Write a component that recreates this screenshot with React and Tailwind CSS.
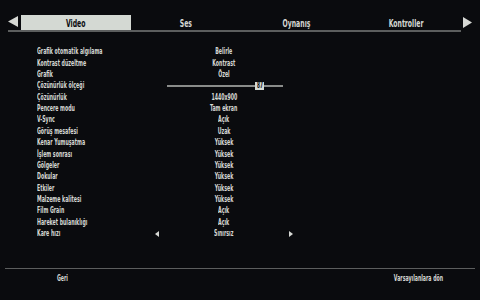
import React from "react";

const rows = [
  ["Grafik otomatik algılama", "Belirle"],
  ["Kontrast düzeltme", "Kontrast"],
  ["Grafik", "Özel"],
  ["Çözünürlük ölçeği", "__slider"],
  ["Çözünürlük", "1440x900"],
  ["Pencere modu", "Tam ekran"],
  ["V-Sync", "Açık"],
  ["Görüş mesafesi", "Uzak"],
  ["Kenar Yumuşatma", "Yüksek"],
  ["İşlem sonrası", "Yüksek"],
  ["Gölgeler", "Yüksek"],
  ["Dokular", "Yüksek"],
  ["Etkiler", "Yüksek"],
  ["Malzeme kalitesi", "Yüksek"],
  ["Film Grain", "Açık"],
  ["Hareket bulanıklığı", "Açık"],
  ["Kare hızı", "__arrows"],
];

const font = { fontFamily: '"Liberation Sans Narrow", "DejaVu Sans Condensed", "Liberation Sans", sans-serif' };

function T({ children, className = "" }) {
  return <span className={"inline-block whitespace-nowrap " + className}>{children}</span>;
}

export default function App() {
  return (
    <div className="w-[480px] h-[300px] bg-[#0a0b0e] flex flex-col font-bold text-[#d6d8d4] overflow-hidden" style={font}>
      {/* header */}
      <div className="flex items-start pt-[15px]">
        <div className="ml-[8px] w-[453px] h-[17px] border-b-2 border-[#5c5e5e] flex items-start">
          <svg width="10" height="11" viewBox="0 0 10 11" className="mt-[1px] mr-[3px] shrink-0">
            <polygon points="10,0 10,11 0,5.5" fill="#d6d8d4" />
          </svg>
          <div className="flex w-[440px]">
            {["Video", "Ses", "Oynanış", "Kontroller"].map((t, i) => (
              <div
                key={t}
                className={
                  "w-[110px] h-[15px] flex items-center justify-center text-[11px] leading-none " +
                  (i === 0 ? "bg-[#d4d9d3] text-[#0a0b0e]" : "text-[#d6d8d4]")
                }
              >
                <T className="scale-x-[0.62] translate-y-[1px]">{t}</T>
              </div>
            ))}
          </div>
        </div>
        <svg width="9" height="11" viewBox="0 0 9 11" className="ml-[2px] mt-[2px]">
          <polygon points="0,0 0,11 9,5.5" fill="#d6d8d4" />
        </svg>
      </div>

      {/* rows */}
      <div className="flex flex-col mt-[14px] text-[9px] leading-none">
        {rows.map(([label, value]) => (
          <div key={label} className="flex items-center h-[11.375px]">
            <div className="w-[150px] pl-[37px]">
              <T className="origin-left scale-x-[0.58]">{label}</T>
            </div>
            <div className="w-[148px] flex items-center justify-center">
              {value === "__slider" ? (
                <div className="relative w-full h-[8px] flex items-center">
                  <div className="ml-[17px] w-[116px] h-[1.5px] bg-[#8a8c8a]" />
                  <div className="absolute left-[105px] top-0 w-[9px] h-[8px] bg-[#d4d9d3] text-[#0a0b0e] flex items-center justify-center text-[8px]">
                    <T className="scale-x-[0.6]">87</T>
                  </div>
                </div>
              ) : value === "__arrows" ? (
                <div className="w-full flex items-center justify-between px-[5px]">
                  <svg width="4" height="6" viewBox="0 0 4 6">
                    <polygon points="4,0 4,6 0,3" fill="#d6d8d4" />
                  </svg>
                  <T className="scale-x-[0.58]">Sınırsız</T>
                  <svg width="4" height="6" viewBox="0 0 4 6">
                    <polygon points="0,0 0,6 4,3" fill="#d6d8d4" />
                  </svg>
                </div>
              ) : (
                <T className="scale-x-[0.58]">{value}</T>
              )}
            </div>
          </div>
        ))}
      </div>

      <div className="flex-1" />

      {/* footer */}
      <div className="mx-[5px] h-[1.5px] bg-[#5c5e5e]" />
      <div className="flex items-center h-[18px] text-[9px] leading-none mb-[13px]">
        <div className="w-[124px] flex justify-center">
          <T className="scale-x-[0.58]">Geri</T>
        </div>
        <div className="flex-1" />
        <div className="w-[124px] flex justify-center">
          <T className="scale-x-[0.58]">Varsayılanlara dön</T>
        </div>
      </div>
    </div>
  );
}
